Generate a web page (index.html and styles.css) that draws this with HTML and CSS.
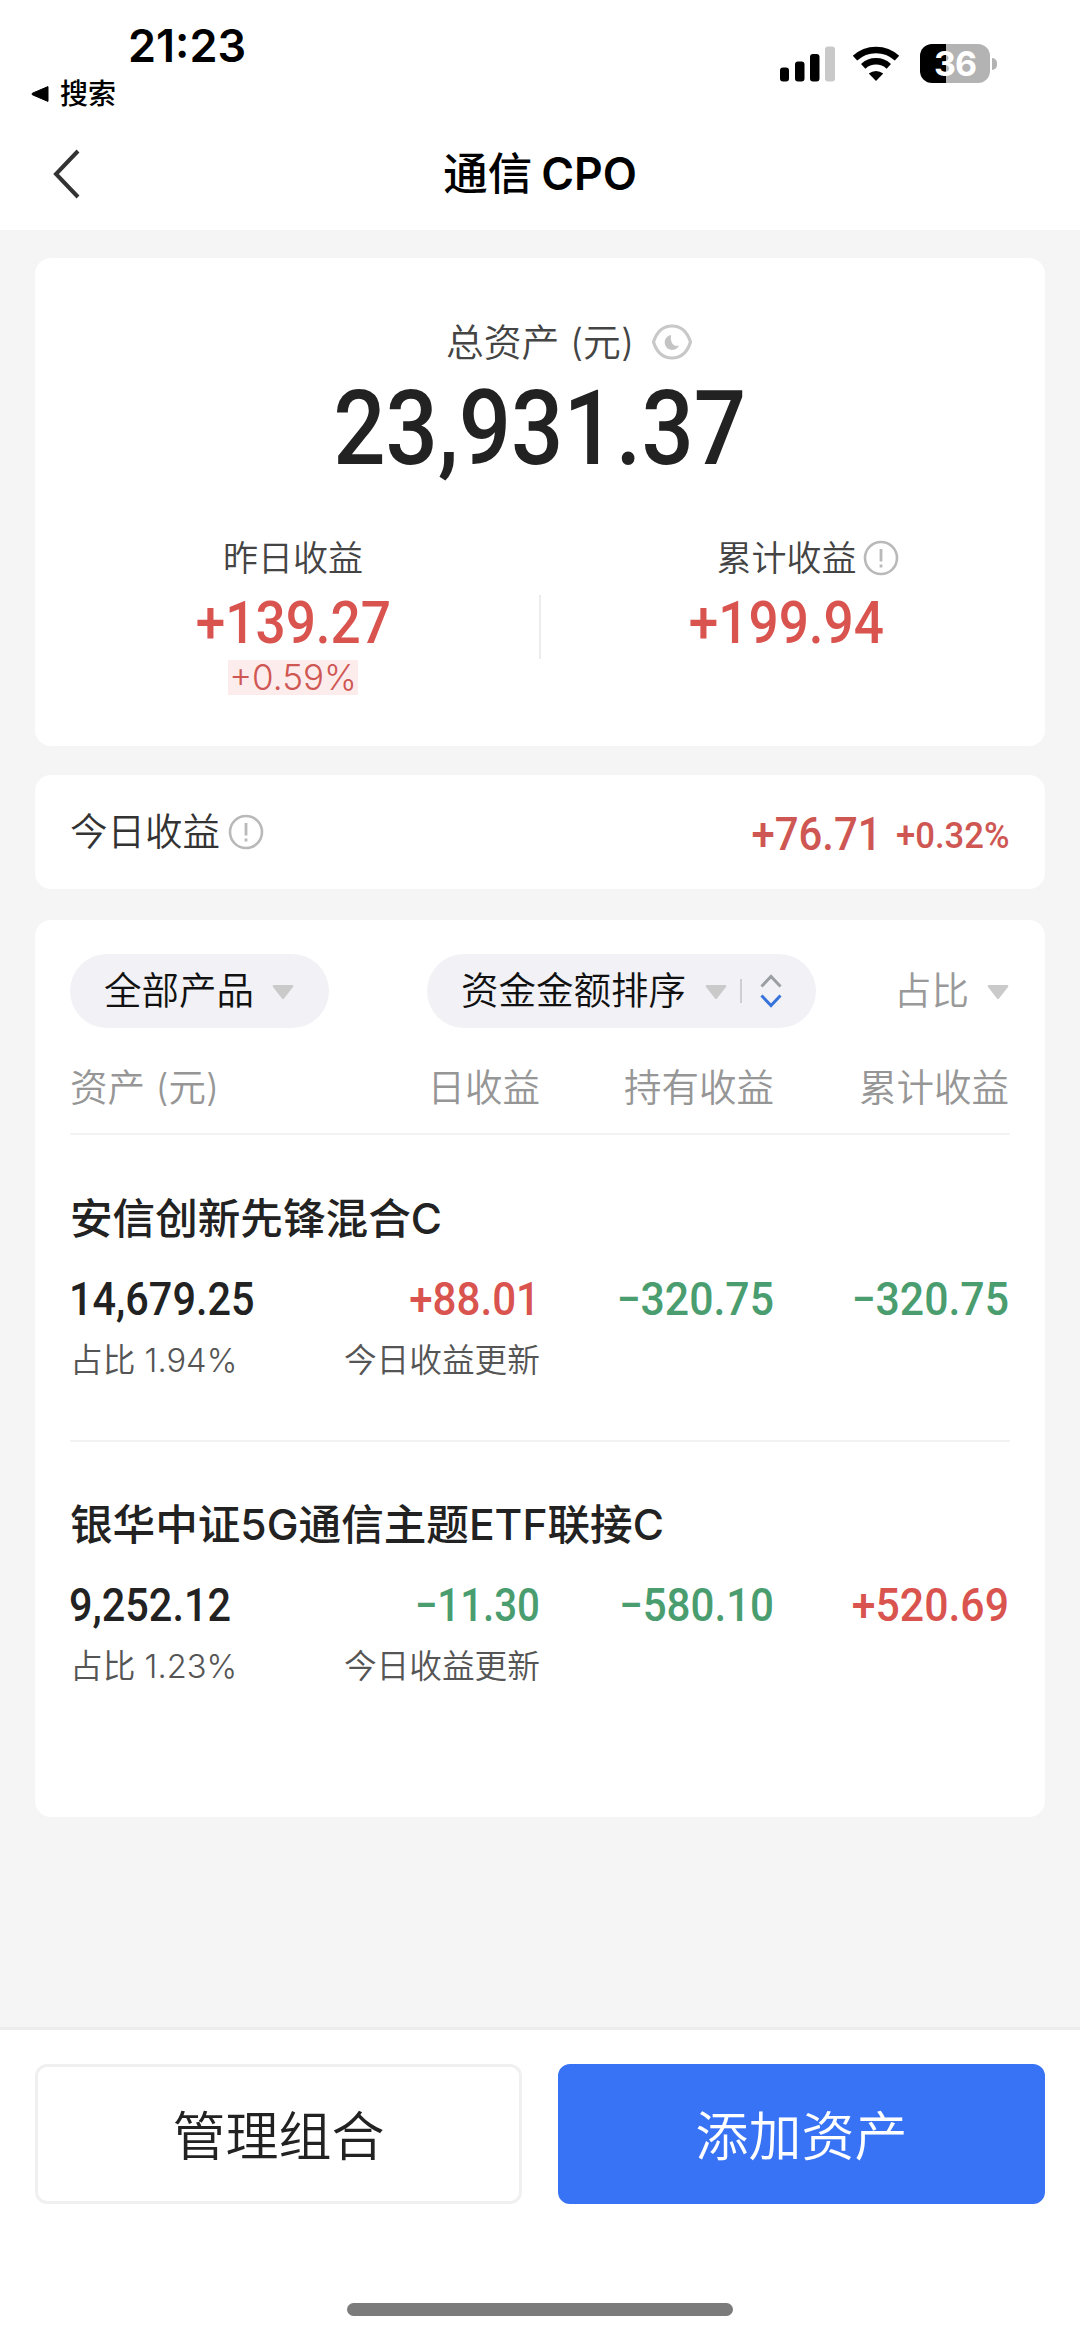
FILE: index.html
```html
<!DOCTYPE html>
<html lang="zh-CN">
<head>
<meta charset="utf-8">
<title>通信CPO</title>
<link rel="stylesheet" href="styles.css">
</head>
<body>
<header class="top">
  <div class="status">
    <div class="status-left">
      <div class="clock">21:23</div>
      <div class="back-app"><svg width="18" height="18" viewBox="0 0 18 18"><path d="M17 1.6v14.8L1.4 9.8Q0.6 9 1.4 8.2z" stroke="#000" stroke-linejoin="round"/></svg><span>搜索</span></div>
    </div>
    <div class="status-right">
      <svg class="signal" width="56" height="36" viewBox="0 0 56 36"><rect x="0" y="21.500" width="9" height="14" rx="3"/><rect x="15" y="15.500" width="9.500" height="20" rx="3"/><rect x="30" y="8" width="9.500" height="27.500" rx="3"/><rect x="45" y="0.500" width="10" height="35" rx="3" fill="#c9c9c9"/></svg>
      <svg class="wifi" width="48" height="37" viewBox="0 0 48 37"><g fill="none" stroke="#000" stroke-width="6.500"><path d="M3 13.200A31 31 0 0 1 45 13.200"/><path d="M11.200 21.300A19 19 0 0 1 36.800 21.300"/></g><path d="M16.800 28.500A11.500 11.500 0 0 1 31.200 28.500L24 36z"/></svg>
      <div class="battery"><span>36</span></div><i class="nub"></i>
    </div>
  </div>
  <nav class="nav">
    <svg class="chev" width="32" height="52" viewBox="0 0 32 52"><path d="M28 3L6 26l22 23" fill="none" stroke="#333" stroke-width="4"/></svg>
    <h1 class="title"><span>通信</span><span class="latin">CPO</span></h1>
  </nav>
</header>

<main class="page">
  <section class="card summary">
    <div class="label total-label"><span>总资产 (元)</span><svg width="42" height="36" viewBox="0 0 42 36"><path d="M2.500 18C6 7 13 2 21 2s15 5 18.500 16C36 29 29 34 21 34S6 29 2.500 18z" fill="none" stroke="#c8c8c8" stroke-width="3.200"/><path d="M20 11a7.500 7.500 0 1 0 8 10.500c-5 1.500-9-2-8-10.500z" fill="#c4c4c4"/></svg></div>
    <div class="total"><span class="num">23,931.37</span></div>
    <div class="halves">
      <div class="half left">
        <div class="label">昨日收益</div>
        <div class="gain"><span class="num">+139.27</span></div>
        <div class="pct">+0.59%</div>
      </div>
      <i class="split"></i>
      <div class="half right">
        <div class="label with-info"><span>累计收益</span><svg class="info" viewBox="0 0 36 36"><circle cx="18" cy="18" r="16" fill="none" stroke="#b9b9b9" stroke-width="2.600"/><path d="M18 9v12.500M18 24.500v3" stroke="#b9b9b9" stroke-width="2.800"/></svg></div>
        <div class="gain"><span class="num">+199.94</span></div>
      </div>
    </div>
  </section>

  <section class="card today">
    <div class="today-label"><span>今日收益</span><svg class="info" viewBox="0 0 36 36"><circle cx="18" cy="18" r="16" fill="none" stroke="#b9b9b9" stroke-width="2.600"/><path d="M18 9v12.500M18 24.500v3" stroke="#b9b9b9" stroke-width="2.800"/></svg></div>
    <div class="today-val"><span class="num amount">+76.71</span><span class="num rate">+0.32%</span></div>
  </section>

  <section class="card list">
    <div class="filters">
      <div class="chip first"><span>全部产品</span><svg class="tri" viewBox="0 0 22 16"><path d="M2 1h18q2 0 1 2L12 14.500q-1 1-2 0L1 3Q0 1 2 1z"/></svg></div>
      <div class="chip second"><span>资金金额排序</span><svg class="tri" viewBox="0 0 22 16"><path d="M2 1h18q2 0 1 2L12 14.500q-1 1-2 0L1 3Q0 1 2 1z"/></svg><i class="bar"></i><svg class="sort" width="22" height="36" viewBox="0 0 22 36" fill="none" stroke-width="3"><path d="M1.500 13.500L11 3.500l9.500 10" stroke="#9b9ea3"/><path d="M1.500 22.500L11 32.500l9.500-10" stroke="#3873dc"/></svg></div>
      <div class="ratio"><span>占比</span><svg class="tri" viewBox="0 0 22 16"><path d="M2 1h18q2 0 1 2L12 14.500q-1 1-2 0L1 3Q0 1 2 1z"/></svg></div>
    </div>
    <div class="cols heads"><span>资产 (元)</span><span>日收益</span><span>持有收益</span><span>累计收益</span></div>
    <article class="fund">
      <h2>安信创新先锋混合C</h2>
      <div class="cols values"><span class="num">14,679.25</span><span class="num up short">+88.01</span><span class="num down">−320.75</span><span class="num down">−320.75</span></div>
      <div class="cols notes"><span>占比 1.94%</span><span>今日收益更新</span></div>
    </article>
    <article class="fund">
      <h2>银华中证5G通信主题ETF联接C</h2>
      <div class="cols values"><span class="num">9,252.12</span><span class="num down narrow">−11.30</span><span class="num down short">−580.10</span><span class="num up">+520.69</span></div>
      <div class="cols notes"><span>占比 1.23%</span><span>今日收益更新</span></div>
    </article>
  </section>
</main>

<footer class="actions">
  <div class="buttons"><button class="btn">管理组合</button><button class="btn primary">添加资产</button></div>
  <i class="home"></i>
</footer>
</body>
</html>
```
FILE: styles.css
```css
* { box-sizing: border-box; }
body {
  margin: 0;
  width: 1080px;
  height: 2336px;
  display: flex;
  flex-direction: column;
  background: #f5f5f5;
  color: #222;
  font-family: Inter, "Noto Sans CJK SC", sans-serif;
  font-weight: 350;
  overflow: hidden;
}
svg, i { display: block; flex: none; }
span { white-space: nowrap; }

.top { height: 230px; background: #fff; }
.status { height: 118px; display: flex; justify-content: space-between; padding: 16px 82px 0 31px; }
.clock { height: 58px; line-height: 60px; padding-left: 97px; font-size: 45px; font-weight: 600; color: #000; }
.back-app { height: 40px; display: flex; align-items: center; gap: 11px; font-size: 28px; line-height: 40px; font-weight: 500; color: #000; }
.status-right { display: flex; align-items: flex-start; padding-top: 28px; }
.signal { margin: 2px 16px 0 0; }
.wifi { margin: 1px 20px 0 0; }
.battery {
  width: 70px; height: 39px; border-radius: 12px;
  background: linear-gradient(90deg, #000 26px, #b3b3b3 26px);
  color: #fff; font-size: 34px; line-height: 39px; font-weight: 700; text-align: center; letter-spacing: -1px;
}
.nub { width: 5px; height: 12px; margin: 14px 1px 0 2px; border-radius: 0 6px 6px 0; background: #b3b3b3; }
.nav { height: 112px; display: grid; grid-template-columns: 80px 1fr 80px; align-items: start; padding: 0 46px 0 50px; }
.chev { margin-top: 30px; }
.title { margin: 0; height: 112px; display: flex; justify-content: center; align-items: baseline; gap: 9px; padding-right: 4px; font-size: 44.500px; line-height: 113px; font-weight: 500; color: #000; }
.latin { font-weight: 600; }

.page { flex: 1; display: flex; flex-direction: column; padding: 28px 35px 0; }
.card { background: #fff; border-radius: 16px; }
.label { height: 46px; line-height: 46px; font-size: 35px; color: #444; text-align: center; }
.num { display: inline-block; font-family: Roboto, sans-serif; font-weight: 500; transform: scaleX(0.91); transform-origin: center; }

.summary { height: 488px; padding-top: 61px; }
.total-label { display: flex; justify-content: center; align-items: center; gap: 17px; padding-left: 59px; font-size: 37.800px; line-height: 44px; }
.total { height: 130px; line-height: 124px; text-align: center; font-size: 103px; color: #222; }
.total .num { transform: scaleX(0.895); }
.halves { display: grid; grid-template-columns: 504px 2px 504px; padding-top: 40px; }
.half { display: flex; flex-direction: column; align-items: center; }
.left { padding-left: 12px; }
.right { padding-right: 13px; }
.gain { height: 79px; line-height: 82px; font-size: 59px; color: #d9534f; }
.gain .num { transform: scaleX(0.9); }
.pct { height: 35px; line-height: 35px; padding: 0 1px; background: #fdecec; color: #cf5753; font-size: 35px; font-weight: 300; }
.split { width: 2px; height: 64px; margin-top: 60px; background: #ececec; }
.with-info { display: flex; align-items: center; gap: 6px; padding-left: 42px; }
.info { width: 36px; height: 36px; }

.today { height: 114px; margin-top: 29px; padding: 0 35px; display: flex; align-items: center; justify-content: space-between; }
.today-label { display: flex; align-items: center; gap: 8px; font-size: 37.500px; line-height: 50px; color: #333; }
.today-label span { margin-top: -1px; }
.filters span { margin-top: -8px; }
.today-val { display: flex; align-items: baseline; gap: 3px; padding-top: 4px; color: #cf5753; }
.amount { font-size: 46px; }
.rate { font-size: 36.500px; line-height: 40px; transform: translateY(-2px) scaleX(0.95); transform-origin: right; }

.list { height: 897px; margin-top: 31px; padding: 34px 35px 0; }
.filters { height: 74px; display: flex; align-items: center; font-size: 37.500px; }
.chip { height: 74px; border-radius: 37px; background: #f2f2f6; display: flex; align-items: center; color: #111; }
.tri { width: 22px; height: 16px; fill: #cacaca; margin-top: 2px; }
.first { width: 259px; padding-left: 34px; gap: 18px; }
.second { width: 389px; margin-left: 98px; padding-left: 34px; gap: 19px; }
.second .bar { width: 2px; height: 24px; margin-left: -6px; background: #cfcfd2; }
.second .sort { margin-left: -1px; }
.ratio { flex: 1; display: flex; align-items: center; justify-content: flex-end; gap: 18px; padding-right: 1px; color: #999; }
.cols { display: grid; grid-template-columns: 200px 270px 234px 235px; text-align: right; }
.cols > :first-child { text-align: left; }
.heads { height: 107px; line-height: 119px; font-size: 37.500px; color: #969696; border-bottom: 2px solid #f3f3f3; }
.fund { height: 305px; padding-top: 53px; }
.fund + .fund { border-top: 2px solid #f3f3f3; padding-top: 52px; }
.fund h2 { margin: 0; height: 61px; line-height: 61px; font-size: 42.600px; font-weight: 500; color: #222; }
.values { height: 82px; line-height: 100px; font-size: 46px; }
.values .num { transform: scaleX(0.93); transform-origin: right; }
.values .num:first-child { transform: translateX(-1px) scaleX(0.9); transform-origin: left; }
.values .num.short { transform: scaleX(0.915); }
.values .num.narrow { transform: scaleX(0.875); }
.up { color: #d9534f; }
.down { color: #4a9d6f; }
.notes { height: 50px; line-height: 58px; font-size: 32.700px; color: #555; }

.actions { height: 309px; background: #fff; border-top: 3px solid #ededed; padding: 34px 35px 0; }
.buttons { display: grid; grid-template-columns: 487px 487px; justify-content: space-between; }
.btn { height: 140px; padding: 6px 0 0; border: 3px solid #f0f0f0; border-radius: 12px; background: #fff; color: #222; font: 350 53px/128px Inter, "Noto Sans CJK SC", sans-serif; }
.primary { background: #3873f6; border-color: #3873f6; color: #fff; }
.home { width: 386px; height: 13px; margin: 99px auto 0; border-radius: 7px; background: #7b7b7b; }
```
